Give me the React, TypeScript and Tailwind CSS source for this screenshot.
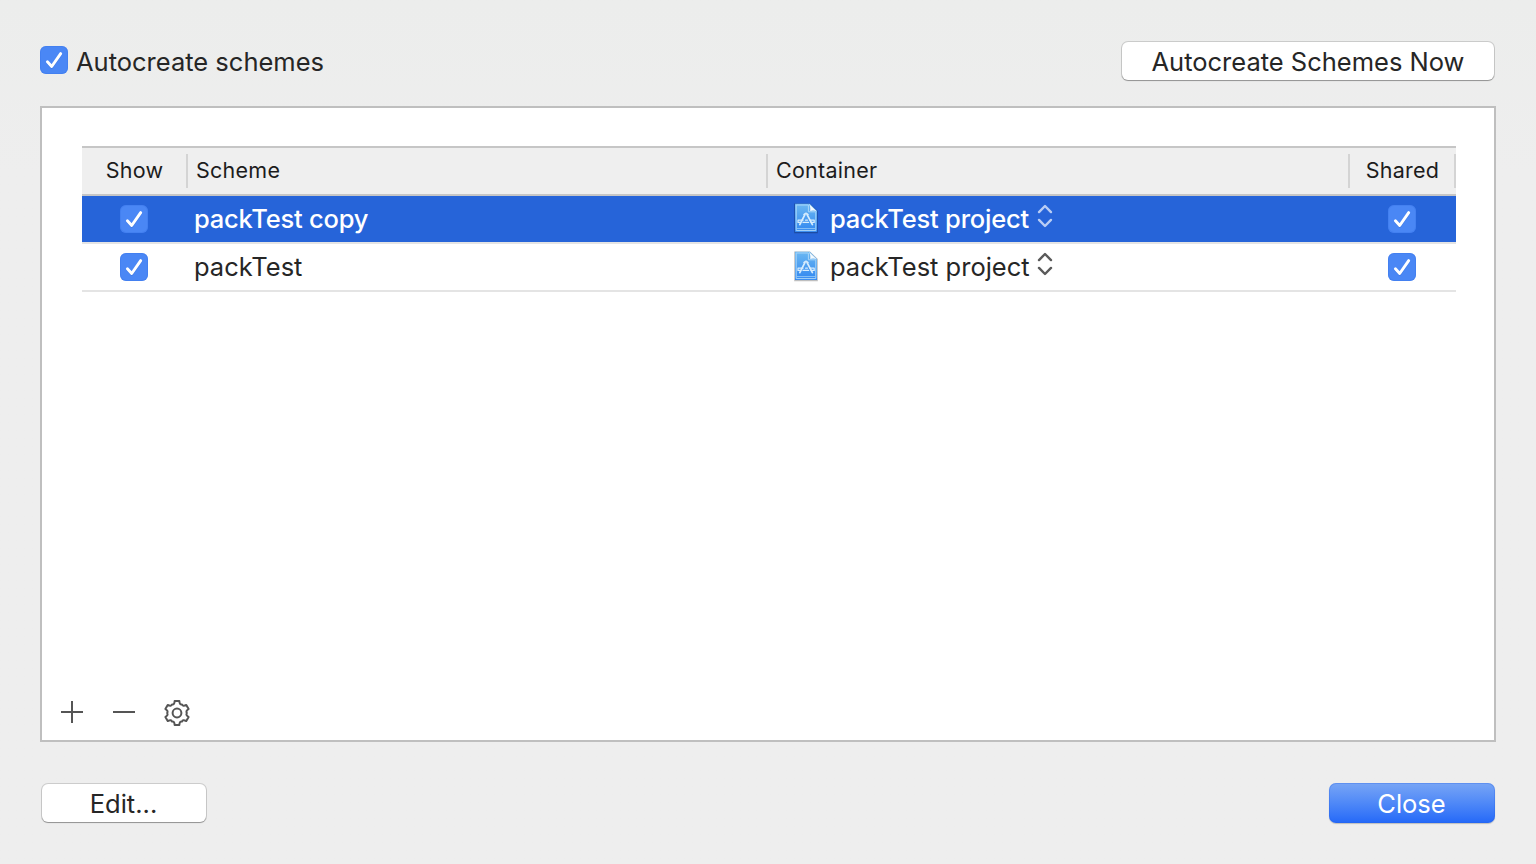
import React from "react";

function Checkbox() {
  return (
    <span
      role="checkbox"
      aria-checked="true"
      className="block size-7 shrink-0 rounded-[6px] bg-[#4a87f5] shadow-[inset_0_0_0_1px_rgba(60,120,235,0.45)]"
    >
      <svg viewBox="0 0 28 28" className="size-7" fill="none" strokeLinecap="round" strokeLinejoin="round">
        <path d="M7.4 16.6 11.7 21.4 20.7 8.4" stroke="#2a5fc4" strokeOpacity="0.3" strokeWidth="2.9" />
        <path d="M7.4 15.8 11.7 20.5 20.7 7.6" stroke="#fff" strokeWidth="2.9" />
      </svg>
    </span>
  );
}

function ProjectIcon() {
  return (
    <svg viewBox="0 0 26 32" className="h-8 w-[26px] shrink-0" fill="none">
      <defs>
        <linearGradient id="doc" x1="0" y1="0" x2="0" y2="1">
          <stop offset="0" stopColor="#6cb8f2" />
          <stop offset="1" stopColor="#3187f0" />
        </linearGradient>
      </defs>
      <path d="M1.2 1.4H17L24.8 9V31.2H1.2Z" fill="#000" fillOpacity="0.25" />
      <path d="M2 1.8H16.8L24 8.9V30H2Z" fill="url(#doc)" />
      <path d="M3.2 3H15.4V9.8H22.8V28.6H3.2Z" stroke="#a9d6f8" strokeWidth="1" />
      <path d="M15.8 1.8 24 9.6C21.6 8 19 8.2 17.2 9 17.6 6 17.2 3.6 15.8 1.8Z" fill="#f4fafe" />
      <path d="M3.4 26.6H22.6" stroke="#8cc4f8" strokeWidth="1" />
      <g stroke="#d8edfd" strokeLinecap="round" strokeLinejoin="round">
        <path d="M12 12.4 6.8 22.6M14 12.4 19.4 22.6" strokeWidth="1.7" />
        <path d="M10.8 12.4 13 11 15.2 12.4" strokeWidth="1.2" />
        <path d="M5 18.2H10M12.6 18.2H14.4M17 18.2H21.2V20.4H18M5 18.2V20.4H7.4M10 20.4H15.6" strokeWidth="1.2" />
      </g>
    </svg>
  );
}

function Stepper({ selected }: { selected: boolean }) {
  return (
    <svg
      viewBox="0 0 16 24"
      className={`h-6 w-4 shrink-0 ${selected ? "text-[#b9cdf5]" : "text-[#5a5a5a]"}`}
      fill="none"
      stroke="currentColor"
      strokeWidth="2.4"
      strokeLinecap="round"
      strokeLinejoin="round"
    >
      <path d="M2 8.1 8 2 14 8.1M2 15.9 8 22 14 15.9" />
    </svg>
  );
}

function polar(angle: number, radius: number) {
  const rad = (angle * Math.PI) / 180;
  return `${(14 + radius * Math.sin(rad)).toFixed(2)} ${(14 - radius * Math.cos(rad)).toFixed(2)}`;
}

const gearPath =
  `M${polar(-11, 12.3)}` +
  [0, 60, 120, 180, 240, 300]
    .map(
      (a) =>
        `L${polar(a + 11, 12.3)}C${polar(a + 15, 9.6)} ${polar(a + 22, 9)} ${polar(a + 30, 9.9)}` +
        `C${polar(a + 38, 9)} ${polar(a + 45, 9.6)} ${polar(a + 49, 12.3)}`
    )
    .join("") +
  "Z";

function Row({ name, selected }: { name: string; selected: boolean }) {
  return (
    <div
      className={`flex h-12 items-center border-b-2 border-[#e4e4e4] ${
        selected ? "bg-[#2664d9] bg-clip-padding font-medium tracking-[-0.2px] text-white" : "text-[#262626]"
      }`}
    >
      <div className="w-[104px] pl-[38px]">
        <Checkbox />
      </div>
      <div className="w-[606px] pl-2 leading-[46px]">{name}</div>
      <div className="flex w-[596px] items-center pl-[1px]">
        <div className="pb-0.5">
          <ProjectIcon />
        </div>
        <div className="w-[218px] pl-[11px] leading-[46px] whitespace-nowrap">packTest project</div>
        <div className="pb-1.5">
          <Stepper selected={selected} />
        </div>
      </div>
      <Checkbox />
    </div>
  );
}

export default function App() {
  return (
    <main className="flex h-[864px] w-[1536px] flex-col overflow-hidden bg-[#eeeeee] bg-linear-to-b from-[#ecedec] to-[#eeeeee] to-20% px-10 font-['Inter',sans-serif] text-[25.5px] text-[#262626]">
      <header className="flex h-[106px] shrink-0 items-start justify-between pt-[41px]">
        <label className="flex items-start pt-[5px]">
          <Checkbox />
          <span className="pl-2 leading-8">Autocreate schemes</span>
        </label>
        <button className="mt-[1px] mr-[2px] h-[38px] w-[372px] rounded-[6px] bg-white leading-10 shadow-[0_0_0_1px_rgba(0,0,0,0.14),0_1px_1px_rgba(0,0,0,0.28)]">
          Autocreate Schemes Now
        </button>
      </header>

      <section className="flex h-[636px] shrink-0 flex-col justify-between border-2 border-[#bfbfbf] bg-white pt-[38px]">
        <div className="mr-[38px] ml-10">
          <div className="flex h-[50px] items-center border-y-2 border-[#c6c6c6] bg-[#efefef] text-[21.5px] tracking-[0.25px] text-[#1c1c1c]">
            <div className="h-[34px] w-[106px] border-r-2 border-[#d4d4d4] pl-[1px] text-center leading-[33px]">Show</div>
            <div className="h-[34px] w-[580px] border-r-2 border-[#d4d4d4] pl-2 leading-[33px]">Scheme</div>
            <div className="h-[34px] w-[582px] border-r-2 border-[#d4d4d4] pl-2 leading-[33px]">Container</div>
            <div className="h-[34px] w-[106px] border-r-2 border-[#d4d4d4] pl-[1px] text-center leading-[33px]">Shared</div>
          </div>
          <Row name="packTest copy" selected />
          <Row name="packTest" selected={false} />
        </div>

        <div className="flex h-[41px] items-start gap-[30px] pl-[19px] text-[#555555]">
          <svg viewBox="0 0 22 28" className="h-7 w-[22px]" stroke="currentColor" strokeWidth="2" fill="none">
            <path d="M0 13H22M11 2V24" />
          </svg>
          <svg viewBox="0 0 22 28" className="h-7 w-[22px]" stroke="currentColor" strokeWidth="2" fill="none">
            <path d="M0 13H22" />
          </svg>
          <svg viewBox="0 0 28 28" className="-ml-[2px] size-7" stroke="currentColor" strokeWidth="2" strokeLinejoin="round" fill="none">
            <path d={gearPath} />
            <circle cx="14" cy="14" r="4.4" />
          </svg>
        </div>
      </section>

      <footer className="flex items-start justify-between pr-[1px] pl-0.5 pt-[41px]">
        <button className="mt-[1px] h-[38px] w-[164px] rounded-[6px] bg-white pr-[1px] leading-10 shadow-[0_0_0_1px_rgba(0,0,0,0.14),0_1px_1px_rgba(0,0,0,0.28)]">
          Edit...
        </button>
        <button className="h-10 w-[166px] rounded-[7px] bg-linear-to-b from-[#78a5f5] to-[#2468f8] pr-[1px] leading-[42px] text-white shadow-[0_1px_1px_rgba(0,0,0,0.2),inset_0_0_0_1px_rgba(40,100,230,0.3)]">
          Close
        </button>
      </footer>
    </main>
  );
}
